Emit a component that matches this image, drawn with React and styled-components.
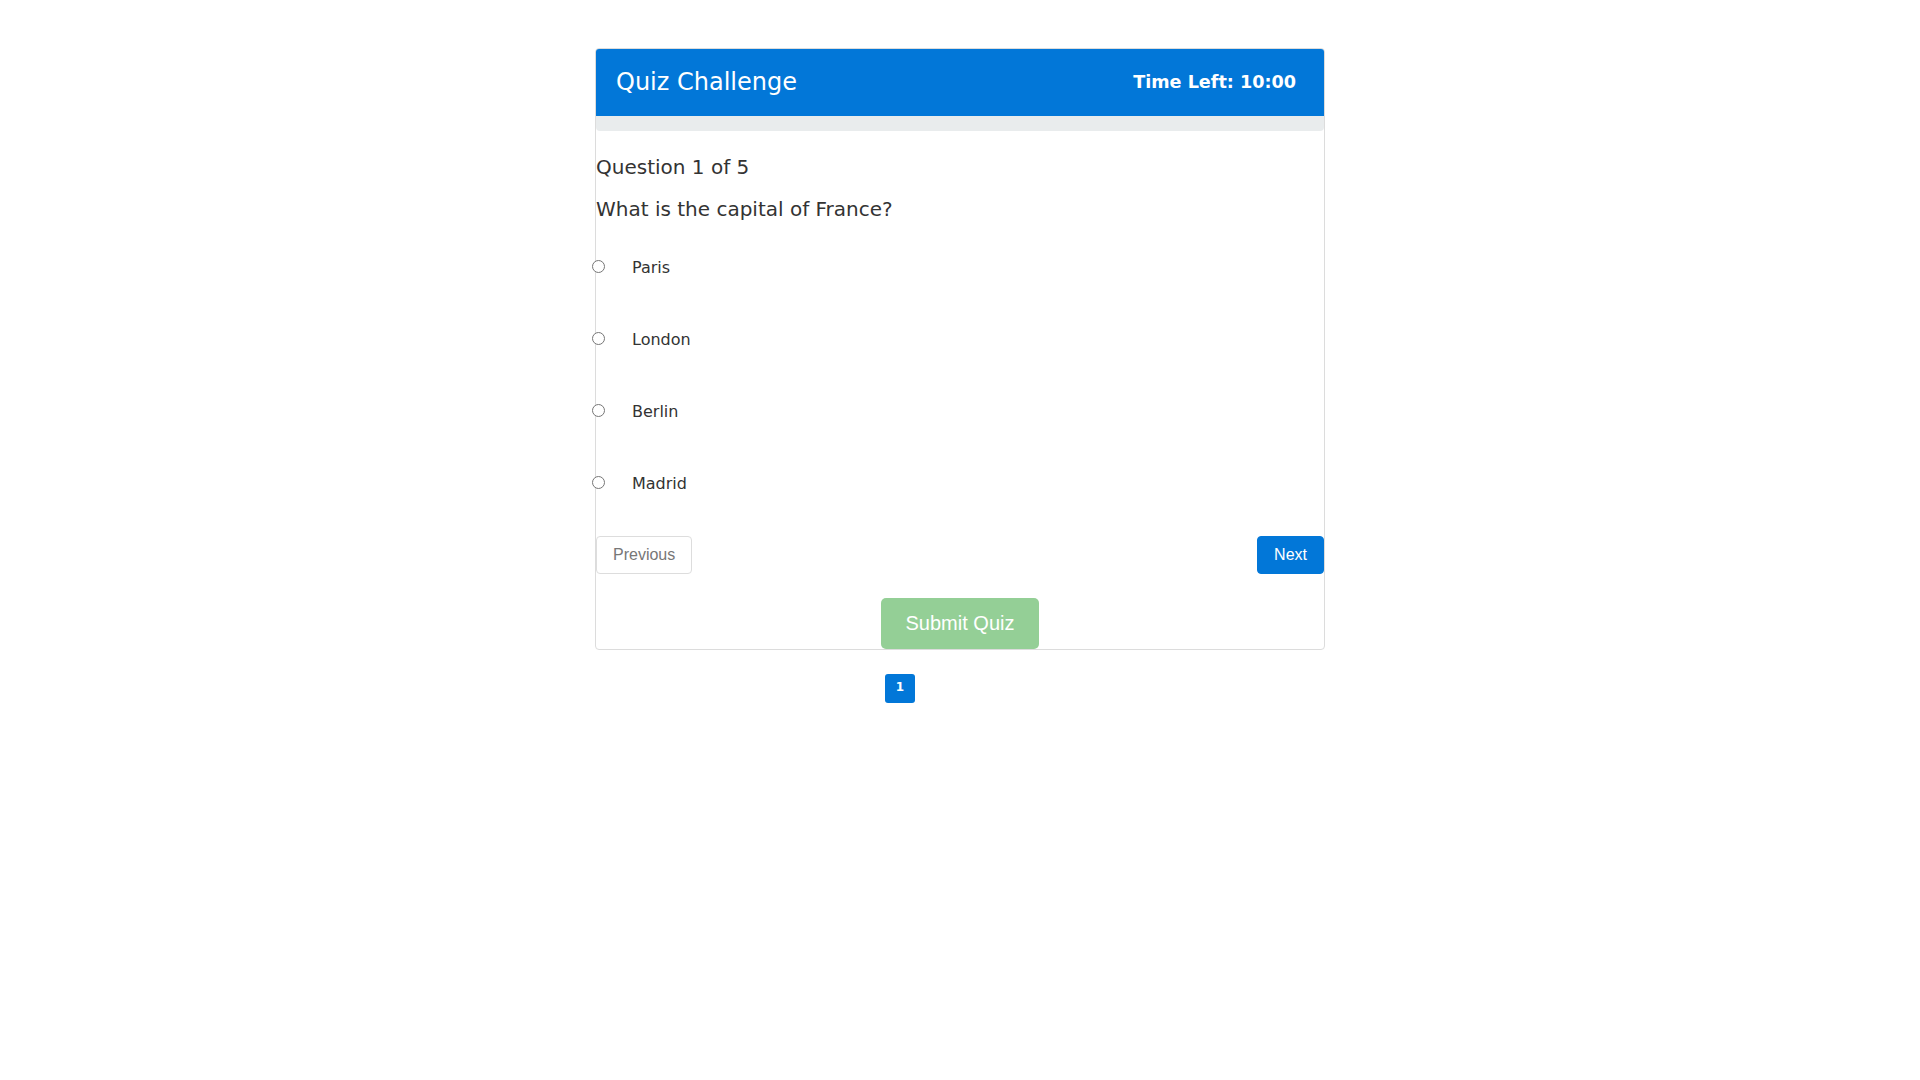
import React, { useState } from 'react';
import styled, { createGlobalStyle } from 'styled-components';

const GlobalStyle = createGlobalStyle`
  body {
    margin: 0;
    background: #fff;
    font-family: 'DejaVu Sans', sans-serif;
    color: #333;
  }
`;

const questions = [
  { text: 'What is the capital of France?', options: ['Paris', 'London', 'Berlin', 'Madrid'] },
  { text: 'Which planet is known as the Red Planet?', options: ['Earth', 'Mars', 'Venus', 'Jupiter'] },
  { text: 'What is 2 + 2?', options: ['3', '4', '5', '6'] },
  { text: 'Who wrote Hamlet?', options: ['Dickens', 'Shakespeare', 'Austen', 'Tolstoy'] },
  { text: 'What is the largest ocean?', options: ['Atlantic', 'Indian', 'Arctic', 'Pacific'] },
];

function App() {
  const [current, setCurrent] = useState(0);
  const [answers, setAnswers] = useState({});
  const q = questions[current];
  const answeredCount = Object.keys(answers).length;

  return (
    <Page>
      <GlobalStyle />
      <Card>
        <Header>
          <Title>Quiz Challenge</Title>
          <Timer>Time Left: 10:00</Timer>
        </Header>
        <Progress>
          <ProgressFill style={{ width: `${(answeredCount / questions.length) * 100}%` }} />
        </Progress>
        <Body>
          <Counter>Question {current + 1} of {questions.length}</Counter>
          <QuestionText>{q.text}</QuestionText>
          <Options>
            {q.options.map((opt) => (
              <Option key={opt}>
                <Radio
                  type="radio"
                  name={`q${current}`}
                  checked={answers[current] === opt}
                  onChange={() => setAnswers({ ...answers, [current]: opt })}
                />
                <span>{opt}</span>
              </Option>
            ))}
          </Options>
          <NavRow>
            <NavButton onClick={() => setCurrent(Math.max(0, current - 1))}>Previous</NavButton>
            <NavButton primary onClick={() => setCurrent(Math.min(questions.length - 1, current + 1))}>
              Next
            </NavButton>
          </NavRow>
          <SubmitRow>
            <SubmitButton disabled={answeredCount < questions.length}>Submit Quiz</SubmitButton>
          </SubmitRow>
        </Body>
      </Card>
      <Pagination>
        <PageBadge>{current + 1}</PageBadge>
      </Pagination>
    </Page>
  );
}

export default App;

const Page = styled.div`
  padding-top: 48px;
  display: flex;
  flex-direction: column;
  align-items: center;
`;

const Card = styled.div`
  width: 728px;
  border: 1px solid #dcdcdc;
  border-radius: 4px;
  background: #fff;
`;

const Header = styled.div`
  height: 67px;
  box-sizing: border-box;
  display: flex;
  align-items: center;
  justify-content: space-between;
  padding: 0 28px 1px 20px;
  background: #0277d8;
  color: #fff;
  border-radius: 3px 3px 0 0;
`;

const Title = styled.h1`
  margin: 0;
  font-size: 24px;
  font-weight: normal;
`;

const Timer = styled.div`
  font-size: 17.6px;
  font-weight: bold;
`;

const Progress = styled.div`
  height: 15px;
  background: #e9eced;
  border-radius: 0 0 4px 4px;
  overflow: hidden;
`;

const ProgressFill = styled.div`
  height: 100%;
  background: #4caf50;
`;

const Body = styled.div`
  display: flex;
  flex-direction: column;
`;

const Counter = styled.h2`
  margin: 24px 0 0;
  font-size: 20px;
  font-weight: normal;
  color: #333;
`;

const QuestionText = styled.p`
  margin: 18px 0 0;
  font-size: 20px;
  color: #333;
`;

const Options = styled.div`
  margin-top: 10px;
  display: flex;
  flex-direction: column;
`;

const Option = styled.label`
  height: 72px;
  display: flex;
  align-items: center;
  font-size: 16px;
  color: #333;
  cursor: pointer;
`;

const Radio = styled.input`
  width: 13px;
  height: 13px;
  margin: -2px 27px 0 -4px;
`;

const NavRow = styled.div`
  margin-top: 17px;
  display: flex;
  justify-content: space-between;
`;

const NavButton = styled.button`
  padding: 9px 16px;
  line-height: 18px;
  font-family: 'Liberation Sans', Arial, sans-serif;
  font-size: 16px;
  border-radius: 4px;
  cursor: pointer;
  border: 1px solid ${(p) => (p.primary ? '#0277d8' : '#dddddd')};
  background: ${(p) => (p.primary ? '#0277d8' : '#fff')};
  color: ${(p) => (p.primary ? '#fff' : '#777')};
`;

const SubmitRow = styled.div`
  margin-top: 24px;
  display: flex;
  justify-content: center;
`;

const SubmitButton = styled.button`
  width: 158px;
  height: 51px;
  border: none;
  border-radius: 5px;
  background: #94cf96;
  color: #fff;
  font-family: 'Liberation Sans', Arial, sans-serif;
  font-size: 20px;
`;

const Pagination = styled.div`
  width: 150px;
  margin-top: 24px;
  display: flex;
`;

const PageBadge = styled.div`
  width: 30px;
  height: 29px;
  display: flex;
  align-items: center;
  justify-content: center;
  padding-bottom: 3px;
  box-sizing: border-box;
  background: #0277d8;
  color: #fff;
  font-size: 12px;
  font-weight: bold;
  border-radius: 3px;
`;
